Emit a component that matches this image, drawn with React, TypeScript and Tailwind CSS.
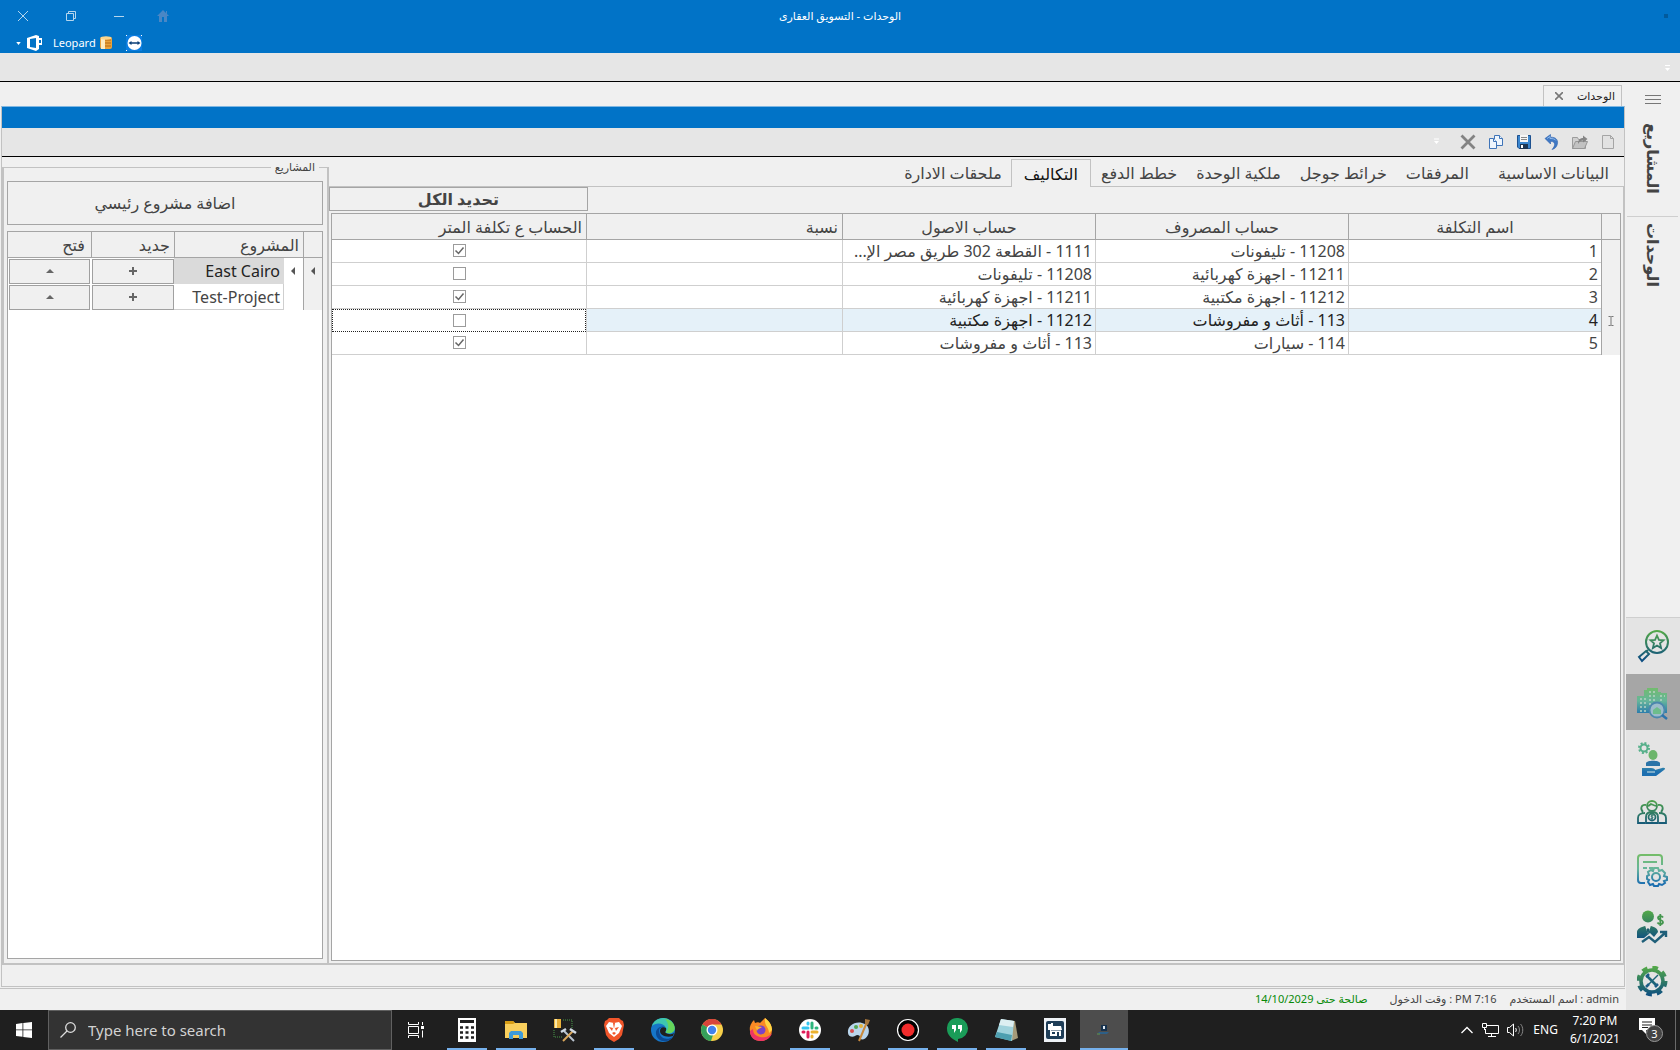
import { useState } from "react";
import type { ReactNode } from "react";

type Cost = {
  name: string;
  expense: string;
  asset: string;
  perMeter: boolean;
};

const costs: Cost[] = [
  { name: "1", expense: "11208 - تليفونات", asset: "1111 - القطعة 302 طريق مصر الإ...", perMeter: true },
  { name: "2", expense: "11211 - اجهزة كهربائية", asset: "11208 - تليفونات", perMeter: false },
  { name: "3", expense: "11212 - اجهزة مكتبية", asset: "11211 - اجهزة كهربائية", perMeter: true },
  { name: "4", expense: "113 - أثاث و مفروشات", asset: "11212 - اجهزة مكتبية", perMeter: false },
  { name: "5", expense: "114 - سيارات", asset: "113 - أثاث و مفروشات", perMeter: true },
];

const tabs = [
  "البيانات الاساسية",
  "المرفقات",
  "خرائط جوجل",
  "ملكية الوحدة",
  "خطط الدفع",
  "التكاليف",
  "ملحقات الادارة",
];

const TitleBar = () => (
  <header className="bg-[#0173c7] text-white h-[53px] shrink-0">
    <div className="grid grid-cols-[1fr_auto_1fr] h-8 items-center">
      <div className="pr-3">
        <span className="block w-1 h-1 bg-[#015a9c]"></span>
      </div>
      <h1 className="text-[11px] leading-4">الوحدات - التسويق العقارى</h1>
      <div dir="ltr" className="flex items-center gap-9 pl-[17px] text-[#b5d6ee]">
        <button aria-label="Close" className="w-3 h-3">
          <svg viewBox="0 0 12 12" className="w-3 h-3" stroke="currentColor" fill="none"><path d="M1 1l10 10M11 1L1 11" /></svg>
        </button>
        <button aria-label="Restore" className="w-3 h-3">
          <svg viewBox="0 0 12 12" className="w-3 h-3" stroke="currentColor" fill="none"><path d="M1.500 3.500h7v7h-7zM3.500 3.500v-2h7v7h-2" /></svg>
        </button>
        <button aria-label="Minimize" className="w-3 h-3">
          <svg viewBox="0 0 12 12" className="w-3 h-3" stroke="currentColor" fill="none"><path d="M1 6.500h10" /></svg>
        </button>
        <button aria-label="Home" className="w-3 h-3 -ml-1 text-[#4a87c5]">
          <svg viewBox="0 0 12 12" className="w-3 h-3" fill="currentColor"><path d="M6 0L0 6h2v6h3V7h2v5h3V6h2l-2-2V1H9v2z" /></svg>
        </button>
      </div>
    </div>
    <div dir="ltr" className="flex items-center h-[21px] pt-px pl-4">
      <svg viewBox="0 0 6 4" className="w-[5px] h-[3px]" fill="#fff"><path d="M0 0h6L3 4z" /></svg>
      <svg viewBox="0 0 16 16" className="w-4 h-4 ml-[6px]" fill="#fff"><path fillRule="evenodd" d="M0 3l9-3 3 1v2h3v7h-3v4l-3 2-9-3zM3 4v8l6 1V3zM12 5v3h2V5z" /></svg>
      <span className="text-[11px] leading-4 ml-[10px]">Leopard</span>
      <svg viewBox="0 0 12 14" className="w-3 h-[14px] ml-1">
        <rect y="1" width="12" height="12" rx="2" fill="#e9a23b" />
        <rect x="1" y="1" width="4" height="12" fill="#fdebc0" />
        <path d="M5 4h6M5 7h6M5 10h6" stroke="#b76b14" />
        <ellipse cx="6" cy="2" rx="5.500" ry="1.700" fill="#fbd58d" />
      </svg>
      <svg viewBox="0 0 16 16" className="w-4 h-4 ml-[14px]">
        <rect width="16" height="16" fill="#0b7de0" />
        <path d="M0 0h1v1H0zM15 0h1v1h-1zM0 15h1v1H0z" fill="#fff" />
        <circle cx="8.500" cy="8" r="7" fill="#fff" />
        <path d="M2.500 8l3-2v1.300h6V6l3 2-3 2V8.700h-6V10z" fill="#0b3f78" />
      </svg>
    </div>
  </header>
);

const Toolbar = () => (
  <div className="flex items-center gap-3 h-7 bg-[#e6e6e6] pr-2 shrink-0">
    <button aria-label="New" className="w-4 h-4">
      <svg viewBox="0 0 16 16" className="w-4 h-4"><path d="M2.500 1.500h8l3 3v10h-11z" fill="#e2e2e2" stroke="#a5a5a5" /><path d="M10.500 1.500v3h3" fill="none" stroke="#a5a5a5" /></svg>
    </button>
    <button aria-label="Open" className="w-4 h-4">
      <svg viewBox="0 0 16 16" className="w-4 h-4"><path d="M.5 14.500v-11h5l1 2h7v9z" fill="#d0d0d0" stroke="#9c9c9c" /><path d="M.5 14.500l3-7h12l-3 7z" fill="#c2c2c2" stroke="#979797" /><path d="M6 10c0-4 2-6 5-6V1.500L15.500 5 11 8.500V6.500c-2 0-3.500 1-5 3.500z" fill="#858585" /></svg>
    </button>
    <button aria-label="Undo" className="w-4 h-4">
      <svg viewBox="0 0 16 16" className="w-4 h-4"><path d="M1 4.500L6.500.5v2.700C12 3 14 6 13.500 9.500 13 12.500 11 15 8 15.500c3-3 4.500-8-1.500-8.200V10z" fill="#3f78c3" stroke="#2c5fae" strokeWidth=".6" /><path d="M3 4.500l3-2v2c3 0 5 .5 6 2" fill="none" stroke="#8fb8ea" /></svg>
    </button>
    <button aria-label="Save" className="w-4 h-4">
      <svg viewBox="0 0 16 16" className="w-4 h-4"><path d="M1.500 1.500h13v13H3l-1.500-1.500z" fill="#3a86cf" stroke="#1e518f" /><rect x="4" y="1" width="8" height="7" fill="#f6f6f6" /><path d="M5 3.500h6M5 5.500h6" stroke="#888" /><rect x="4" y="10" width="8" height="5" fill="#1c3552" /><rect x="5" y="11" width="2" height="3" fill="#fff" /></svg>
    </button>
    <button aria-label="Copy" className="w-4 h-4">
      <svg viewBox="0 0 16 16" className="w-4 h-4" fill="#eef5fd" stroke="#3f74b8"><path d="M6.500 1.500h5l3 3v7h-8z" /><path d="M11.500 1.500v3h3" /><path d="M1.500 4.500h4l3 3v7h-7z" /><path d="M5.500 4.500v3h3" /></svg>
    </button>
    <button aria-label="Delete" className="w-4 h-4">
      <svg viewBox="0 0 16 16" className="w-4 h-4" fill="none" stroke="#838383" strokeWidth="2.800"><path d="M1.500 1.500l13 13M14.500 1.500l-13 13" /></svg>
    </button>
    <button aria-label="More" className="w-4 h-4 mr-1">
      <svg viewBox="0 0 16 16" className="w-4 h-4" fill="#fff"><path d="M6 4.500h5v1H6zM6 7h5L8.500 10z" /></svg>
    </button>
  </div>
);

const ProjectRow = ({ name, active }: { name: string; active?: boolean }) => (
  <tr className="h-[26px]">
    <td className="bg-[#f0f0f0] border-l border-[#a5a5a5] p-0">
      {active && <svg viewBox="0 0 4 8" className="w-1 h-2 mx-auto" fill="#555"><path d="M4 0v8L0 4z" /></svg>}
    </td>
    <td className="p-0">
      {active && <svg viewBox="0 0 4 8" className="w-1 h-2 mr-2" fill="#555"><path d="M4 0v8L0 4z" /></svg>}
    </td>
    <td className={active ? "bg-[#dadada] text-[#222] p-0 pr-1" : "bg-white border-b border-r border-[#cfcfcf] p-0 pr-[3px]"}>
      <span dir="ltr">{name}</span>
    </td>
    <td className="p-0 pl-px">
      <button aria-label="جديد" className="block w-full h-[25px] bg-[#f0f0f0] border border-[#a0a0a0]">
        <svg viewBox="0 0 8 8" className="w-2 h-2 mx-auto" stroke="#666" strokeWidth="2"><path d="M4 0v8M0 4h8" /></svg>
      </button>
    </td>
    <td className="p-0 px-px">
      <button aria-label="فتح" className="block w-full h-[25px] bg-[#f0f0f0] border border-[#a0a0a0]">
        <svg viewBox="0 0 8 4" className="w-2 h-1 mx-auto" fill="#666"><path d="M0 4h8L4 0z" /></svg>
      </button>
    </td>
  </tr>
);

const Projects = () => (
  <fieldset className="w-[327px] shrink-0 min-w-0 flex flex-col border-2 border-t border-[#c2c2c2] pl-[3px] pr-1 pt-1 pb-1">
    <legend className="text-[11px] leading-5 px-1 mr-1">المشاريع</legend>
    <div className="flex flex-col gap-[6px] h-full">
      <button className="h-[44px] w-full shrink-0 border border-[#a5a5a5] text-base">اضافة مشروع رئيسي</button>
      <div className="grow bg-white border border-[#a5a5a5]">
        <table className="w-full table-fixed border-separate border-spacing-0 text-base leading-5">
          <colgroup>
            <col className="w-[19px]" />
            <col className="w-[19px]" />
            <col className="w-[110px]" />
            <col className="w-[83px]" />
            <col />
          </colgroup>
          <thead>
            <tr className="h-[26px] bg-[#f0f0f0] text-right">
              <th className="border-b border-l border-[#a5a5a5] p-0"></th>
              <th colSpan={2} className="border-b border-l border-[#a5a5a5] font-normal p-0 pr-1">المشروع</th>
              <th className="border-b border-l border-[#a5a5a5] font-normal p-0 pr-1">جديد</th>
              <th className="border-b border-[#a5a5a5] font-normal p-0 pr-[6px]">فتح</th>
            </tr>
          </thead>
          <tbody>
            <ProjectRow name="East Cairo" active />
            <ProjectRow name="Test-Project" />
          </tbody>
        </table>
      </div>
    </div>
  </fieldset>
);

const CostTable = () => {
  const [rows, setRows] = useState(costs);
  const toggle = (name: string) => {
    setRows(rows.map((r) => (r.name === name ? { ...r, perMeter: !r.perMeter } : r)));
  };

  return (
    <table className="w-full table-fixed border-separate border-spacing-0 text-base leading-5">
      <thead>
        <tr className="h-[26px] bg-[#f0f0f0] [&>th]:border-b [&>th]:border-l [&>th]:border-[#a5a5a5] [&>th]:font-normal [&>th]:p-0">
          <th className="w-[19px]"></th>
          <th className="w-[253px]">اسم التكلفة</th>
          <th className="w-[253px]">حساب المصروف</th>
          <th className="w-[253px]">حساب الاصول</th>
          <th className="w-[256px]"><div className="text-right pr-1">نسبة</div></th>
          <th className="border-l-0!"><div className="text-right pr-1">الحساب ع تكلفة المتر</div></th>
        </tr>
      </thead>
      <tbody>
        {rows.map((row) => {
          const current = row.name === "4";
          const cell = "border-b border-l border-[#cfcfcf] p-0 pr-[3px] whitespace-nowrap overflow-hidden";
          return (
            <tr key={row.name} className={current ? "h-[23px] bg-[#e5f1f9] text-[#222]" : "h-[23px]"}>
              <td className="bg-[#f0f0f0] border-l border-[#a5a5a5] p-0">
                {current && (
                  <svg viewBox="0 0 6 10" className="w-[6px] h-[10px] mx-auto" fill="none" stroke="#777"><path d="M.5.5h2l.5.500.500-.500h2M3 1v8M.5 9.500h2l.5-.500.500.500h2" /></svg>
                )}
              </td>
              <td className={cell}>{row.name}</td>
              <td className={cell}>{row.expense}</td>
              <td className={cell}>{row.asset}</td>
              <td className={cell}></td>
              <td className={current ? "bg-white border border-dotted border-[#222] p-0" : "border-b border-[#cfcfcf] p-0 pb-px"}>
                <label className="relative block w-[13px] h-[13px] mx-auto">
                  <input
                    type="checkbox"
                    aria-label="الحساب ع تكلفة المتر"
                    checked={row.perMeter}
                    onChange={() => toggle(row.name)}
                    className="block appearance-none w-[13px] h-[13px] bg-white border border-[#9b9b9b]"
                  />
                  {row.perMeter && (
                    <svg viewBox="0 0 13 13" className="absolute inset-0 pointer-events-none" fill="none" stroke="#666" strokeWidth="1.500"><path d="M2.500 6.500l3 3 5-6" /></svg>
                  )}
                </label>
              </td>
            </tr>
          );
        })}
      </tbody>
    </table>
  );
};

const Costs = () => (
  <section className="grow min-w-0 flex flex-col">
    <nav className="flex h-[30px] pt-[2px] shrink-0 text-base">
      {tabs.map((tab) =>
        tab === "التكاليف" ? (
          <button key={tab} className="px-3 border border-b-0 border-[#c2c2c2] text-[#111] whitespace-nowrap">{tab}</button>
        ) : (
          <button key={tab} className="pr-[9px] pl-[10px] border-b border-[#c2c2c2] whitespace-nowrap first:pr-[15px] first:pl-5">{tab}</button>
        )
      )}
      <div className="grow border-b border-[#c2c2c2]"></div>
    </nav>
    <div className="grow flex flex-col border-r border-b-2 border-[#c2c2c2]">
      <div className="flex justify-end h-[26px] shrink-0">
        <button className="w-[259px] h-6 border border-[#a5a5a5] text-base leading-5 font-bold">تحديد الكل</button>
      </div>
      <div className="grow bg-white border border-[#a5a5a5] mr-[2px] ml-[2px] mb-[2px]">
        <CostTable />
      </div>
    </div>
  </section>
);

/* side module icons */

const moduleIcons: ReactNode[] = [
  <g key="a" fill="none" stroke="url(#mod)">
    <circle cx="20" cy="12" r="11" strokeWidth="2" />
    <path d="M20 5.500l1.900 4.400 4.600.4-3.500 3 1.100 4.700-4.100-2.500-4.100 2.500 1.100-4.700-3.500-3 4.600-.4z" strokeWidth="1.800" />
    <path d="M11 20l-2 2M2 27l7-6 3 3-7 7z" strokeWidth="2" />
  </g>,
  <g key="b">
    <path d="M0 28V10h7V4h3V2h11v4h3v1h6v20H0z" fill="url(#modSoft)" />
    <path d="M3 13h2m2 0h2M3 17h2m2 0h2M3 21h2m2 0h2M12 6h2m2 0h2M12 10h2m2 0h2M12 14h2m2 0h2M23 10h2m2 0h1M23 14h2M3 25h2m2 0h2M12 18h2" stroke="#b9d2c4" strokeWidth="1.500" />
    <circle cx="20" cy="24" r="7.500" fill="#9cbccb" stroke="#4c87ad" strokeWidth="1.800" />
    <path d="M16 24l4-3 4 3v4h-8z" fill="#6dbd8b" />
    <path d="M25 29l5 4" stroke="#2c74ad" strokeWidth="2.500" />
  </g>,
  <g key="c">
    <circle cx="7" cy="6" r="3.500" fill="none" stroke="#57b08b" strokeWidth="2" />
    <circle cx="7" cy="6" r="5" fill="none" stroke="#57b08b" strokeWidth="2" strokeDasharray="2 1.900" />
    <ellipse cx="16" cy="13" rx="4.500" ry="5" fill="#6cb56b" />
    <path d="M9 24v-3c1-3 13-3 14 0v3z" fill="#2b74a8" />
    <path d="M5 26h9c3 0 4 1 4 2l7-2c3-1 4 1 2 2l-8 6H5z" fill="url(#modSoft)" />
    <path d="M10 30h8" stroke="#d8e8e4" />
  </g>,
  <g key="d" fill="none" stroke="url(#mod)" strokeWidth="1.800">
    <circle cx="15" cy="8" r="5" />
    <path d="M10 8c2 0 3-1 4-2 2 1 4 2 6 2M9 25V19c0-3 2-5 6-5s6 2 6 5v6z" />
    <path d="M9 7c-5-1-6 4-3 7M21 7c5-1 6 4 3 7M8 15c-5 0-7 2-7 5v5h7M22 15c5 0 7 2 7 5v5h-7" />
    <circle cx="15" cy="19" r="3.500" />
    <path d="M16.500 17.500c-3-1-3 1.500-1.500 1.500s1.500 2-1.500 1.500M15 16v6" strokeWidth="1" />
  </g>,
  <g key="e" fill="none" stroke="url(#modSoft)" strokeWidth="2">
    <path d="M8 29H4c-2 0-3-1-3-3V4c0-2 1-3 3-3h18c2 0 3 1 3 3v7M6 8h14M6 14h4M12 14h4" />
    <path d="M17 14h4l1 3 3-1 3 3-1 3 3 1v3l-3 1 1 2-3 2-3-1-1 2h-4l-1-2-3 1-2-3 1-2-2-1v-3l2-1-1-3 3-2 2 1z" />
    <circle cx="19" cy="23" r="4" />
  </g>,
  <g key="f">
    <circle cx="11" cy="6.500" r="6" fill="url(#mod)" />
    <path d="M0 28v-6c0-3 4-5 8-6l3 4 3-4c4 1 7 3 7 6l-4 5-4-4-6 5z" fill="url(#mod)" />
    <path d="M8.500 17l2.500 7 2.500-7" fill="#e5e5e5" />
    <path d="M11 18l1.500 1.500L11 25l-1.500-5.500z" fill="#1b5c6c" />
    <path d="M5 32l7-5 6 5 10-9M23 22h6v5" fill="none" stroke="#1f5f79" strokeWidth="2.400" />
    <path d="M26 7.500c-1-2-5-2-5 .5s5 1.500 5 4-4 3-5.500.500M23.300 4v12" fill="none" stroke="#43964e" strokeWidth="1.800" />
  </g>,
  <g key="g">
    <circle cx="15" cy="15" r="13.500" fill="none" stroke="url(#mod)" strokeWidth="4" strokeDasharray="5.600 5" />
    <circle cx="15" cy="15" r="11" fill="none" stroke="url(#mod)" strokeWidth="3.500" />
    <path d="M10 10l9 9" stroke="#1c6478" strokeWidth="2.600" />
    <path d="M21 9L10 20" stroke="#1c6478" strokeWidth="1.500" />
    <path d="M9 11l3-3M18 21l3-3M9 21l3-3" stroke="#1c5c86" strokeWidth="2.500" fill="none" />
  </g>,
];

const SideBar = () => (
  <aside className="w-[55px] shrink-0 flex flex-col items-stretch">
    <button aria-label="القائمة" className="mt-3 mx-auto w-4 h-[11px]">
      <svg viewBox="0 0 16 11" className="w-4 h-[11px]" stroke="#777"><path d="M0 1.500h16M0 5.500h16M0 9.500h16" /></svg>
    </button>
    <button className="[writing-mode:vertical-rl] h-[111px] self-center text-[16px] leading-6 font-semibold flex items-center justify-center pb-1">المشاريع</button>
    <div className="h-px bg-[#cfcfcf] mx-[2px]"></div>
    <button className="[writing-mode:vertical-rl] h-[76px] self-center text-[16px] leading-6 font-semibold flex items-center justify-center">الوحدات</button>
    <div className="mt-auto ml-px bg-[#e4e4e4] border-t border-[#cfcfcf]">
      {moduleIcons.map((icon, i) => (
        <button
          key={i}
          aria-label="module"
          className={i === 1 ? "flex w-full h-14 pt-[2px] items-center justify-center bg-[#a6a6a6]" : "flex w-full h-14 pt-[2px] items-center justify-center"}
        >
          <svg viewBox="0 0 32 34" className="w-8 h-[34px]">
            <defs>
              <linearGradient id="mod" gradientUnits="userSpaceOnUse" x1="0" y1="0" x2="0" y2="30"><stop stopColor="#55ab47" /><stop offset="1" stopColor="#0d4d81" /></linearGradient>
              <linearGradient id="modSoft" gradientUnits="userSpaceOnUse" x1="0" y1="0" x2="0" y2="30"><stop stopColor="#74bd67" /><stop offset=".5" stopColor="#66b59b" /><stop offset="1" stopColor="#1d6fb0" /></linearGradient>
            </defs>
            {icon}
          </svg>
        </button>
      ))}
    </div>
  </aside>
);

type TaskApp = { name: string; running?: boolean; active?: boolean; icon: ReactNode };

const taskApps: TaskApp[] = [
  {
    name: "Calculator",
    running: true,
    icon: (
      <>
        <path d="M3 0h18v24H3z" fill="#fff" />
        <path d="M5 2h14v3H5z" fill="#1f1f1f" />
        <path d="M5 9.500h3m2.500 0h3m2.500 0h3M5 14.500h3m2.500 0h3m2.500 0h3M5 19.500h3m2.500 0h3m2.500 0h3" stroke="#1f1f1f" strokeWidth="2.500" />
      </>
    ),
  },
  {
    name: "File Explorer",
    running: true,
    icon: (
      <>
        <path d="M1 3h8l2 2h12v15H1z" fill="#f9cf5c" />
        <path d="M1 3h8l2 2-2 1H1z" fill="#d79d15" />
        <path d="M5 21v-6l2-2h10l2 2v6h-4v-4H9v4z" fill="#3f9bd8" />
      </>
    ),
  },
  {
    name: "Database tools",
    icon: (
      <>
        <path d="M1 1h7v9H1z" fill="#eab23c" />
        <path d="M2 1h2v9H2z" fill="#fce9a8" />
        <path d="M10 2h9v8M1 12v7h8" fill="none" stroke="#4a9a4a" strokeDasharray="1 1" />
        <path d="M11 13l10 10" stroke="#b9c3cf" strokeWidth="2" />
        <path d="M20 13L10 23" stroke="#d9a65a" strokeWidth="2" />
        <path d="M8 14l5-3M17 11l6 4" stroke="#cfd8e2" strokeWidth="2.500" />
      </>
    ),
  },
  {
    name: "Brave",
    running: true,
    icon: (
      <>
        <path d="M7 0h10l2 2 2 1 1 4-2 10-3 4-5 3-5-3-3-4L2 7l1-4 2-1z" fill="#f1562b" />
        <path d="M7 4l5 1 5-1 3 4-3 7-5 4-5-4-3-7z" fill="#fff" />
        <path d="M7 9l4 1-1 3zM17 9l-4 1 1 3zM10 15l2-1 2 1-2 2zM11 5h2l-1 6z" fill="#f1562b" />
      </>
    ),
  },
  {
    name: "Edge",
    icon: (
      <>
        <circle cx="12" cy="12" r="12" fill="#1676c9" />
        <path d="M1 8C4-2 19-3 23 7c2 6-3 10-8 8-2-1 1-2 0-5-3-6-11-5-14-2z" fill="#3ec6b0" />
        <path d="M14 1c9 1 12 10 8 13-3 2-7 1-7 0 4-4 2-10-1-13z" fill="#66d55a" />
        <path d="M8 12c0 8 7 11 14 7-6 8-18 4-17-5 0-3 5-7 9-5-4 0-6 1-6 3z" fill="#0c4a94" />
        <path d="M15 15c-2-1 1-2 0-5-3-2-6 0-6 3 0 4 6 7 13 5l1-3c-3 2-6 1-8 0z" fill="#1f1f1f" />
      </>
    ),
  },
  {
    name: "Chrome",
    icon: (
      <>
        <circle cx="12" cy="12" r="11" fill="#f7cf4a" />
        <path d="M12 12L2.500 6.500C6-1 18-1 21.500 6.500H12z" fill="#d9453b" />
        <path d="M2.500 6.500L12 12l1 5-2 6C2 22-1 13 2.500 6.500z" fill="#35a05a" />
        <circle cx="12" cy="12" r="5.500" fill="#fff" />
        <circle cx="12" cy="12" r="4.200" fill="#4381ec" />
      </>
    ),
  },
  {
    name: "Firefox",
    icon: (
      <>
        <path d="M1 13C0 8 3 4 5 2l1 3c2-1 4-1 5 0l5-5c4 3 7 7 7 12 0 6-5 11-11 11S1 19 1 13z" fill="#fb8a25" />
        <path d="M1 13c0 7 5 10 11 10s10-4 11-8c-3 4-7 5-12 4-4-1-7-3-7-8z" fill="#ee3566" />
        <path d="M16 0c4 3 7 7 7 12l-3 3c0-6-5-7-4-15z" fill="#ffd644" />
        <circle cx="12" cy="12" r="4.500" fill="#7b43c9" />
        <path d="M6 8l7 1c-2 2-4 1-5 4z" fill="#fdb42e" />
      </>
    ),
  },
  {
    name: "Slack",
    running: true,
    icon: (
      <>
        <circle cx="12" cy="12" r="11" fill="#fff" />
        <g strokeWidth="3" strokeLinecap="round">
          <path d="M5 10h5M10 5v1" stroke="#36c5f0" />
          <path d="M14 5v5M18 10h1" stroke="#2eb67d" />
          <path d="M14 14h5M14 18v1" stroke="#ecb22e" />
          <path d="M10 14v5M5 14h1" stroke="#e01e5a" />
        </g>
      </>
    ),
  },
  {
    name: "Paint",
    icon: (
      <>
        <path d="M1 15C0 8 8 3 15 5c7 1 8 8 6 12-3 6-9 5-8 2 0-2-3-3-5-1-3 2-7 0-7-3z" fill="#b9d5ec" />
        <circle cx="5" cy="13" r="2" fill="#d94c4c" />
        <circle cx="9" cy="9" r="2" fill="#53a653" />
        <circle cx="14" cy="8" r="2" fill="#e6b43c" />
        <path d="M12 23l8-19" stroke="#c98a3d" strokeWidth="2" />
        <path d="M18 1l5 1-2 5-3-1z" fill="#a5763d" />
      </>
    ),
  },
  {
    name: "Recorder",
    running: true,
    icon: (
      <>
        <circle cx="12" cy="12" r="10.500" fill="#000" stroke="#fff" strokeWidth="1.200" />
        <circle cx="12" cy="12" r="6.500" fill="#f02b2b" />
      </>
    ),
  },
  {
    name: "Hangouts",
    running: true,
    icon: (
      <>
        <path d="M12 0a10.500 10.500 0 0 1 1 21v3c-6-3-11-7-11-13A10 10 0 0 1 12 0z" fill="#1a9c58" />
        <path d="M7 7h4v5l-2 3V11H7zM13 7h4v5l-2 3v-4h-2z" fill="#fff" />
      </>
    ),
  },
  {
    name: "Notepad",
    running: true,
    icon: (
      <>
        <path d="M7 2l14 1 3 17-7 3z" fill="#a59a79" />
        <path d="M7 1l13 2-2 20L1 19z" fill="#9fd2dc" />
        <path d="M7 1l13 2-1 6L5 7z" fill="#ddeff2" />
        <path d="M3 14l15 3-1 6L1 19z" fill="#4d9fb0" />
      </>
    ),
  },
  {
    name: "Store",
    icon: (
      <>
        <path d="M1 0h22v24H1z" fill="#eef2f6" />
        <rect x="3" y="3" width="18" height="18" rx="2" fill="#1e3d57" />
        <path d="M5 6h3V5h2v3h8l1 4h-1v6H7v-6H5z" fill="#fff" />
        <path d="M9 14h3v2H9zM14 14h2v4h-2zM8 12h10v.500H8z" fill="#1e3d57" />
      </>
    ),
  },
  {
    name: "Leopard",
    running: true,
    active: true,
    icon: (
      <>
        <path d="M9 7h6v6H9z" fill="#17324d" />
        <path d="M11 8h2v3h-2z" fill="#dfe9f2" />
        <path d="M6 14h11l-2 2H8z" fill="#2d5f87" />
        <path d="M5 16h3" stroke="#5f9a54" />
      </>
    ),
  },
];

const TaskBar = () => (
  <footer dir="ltr" className="flex h-10 shrink-0 bg-[#1f1f1f] text-white">
    <button aria-label="Start" className="w-12 flex items-center justify-center">
      <svg viewBox="0 0 16 16" className="w-4 h-4" fill="#fff"><path d="M0 2l6.500-.900V7.500H0zM7.300 1L16 0v7.500H7.300zM0 8.300h6.500v6.500L0 14zM7.300 8.300H16V16l-8.700-1.100z" /></svg>
    </button>
    <label className="w-[344px] flex items-center gap-3 bg-[#333] border border-[#606060] pl-[11px]">
      <svg viewBox="0 0 16 16" className="w-4 h-4" fill="none" stroke="#ddd" strokeWidth="1.300"><circle cx="10.500" cy="5.500" r="4.800" /><path d="M7 9l-6.500 6.500" /></svg>
      <input type="text" aria-label="Search" placeholder="Type here to search" className="grow bg-transparent text-[15px] leading-5 placeholder:text-[#d2d2d2] outline-none" />
    </label>
    <button aria-label="Task View" className="w-[51px] pr-1 flex items-center justify-center">
      <svg viewBox="0 0 16 16" className="w-4 h-4" fill="none" stroke="#fff"><path d="M.5 0v2.500h10V0M.5 16v-2.500h10V16M.5 4.500h10v7H.5zM14.500 0v3M14.500 8.500v7" /><path d="M13 4h3v3h-3z" fill="#fff" stroke="none" /></svg>
    </button>
    <div className="flex gap-px">
      {taskApps.map((app) => (
        <button
          key={app.name}
          aria-label={app.name}
          className={app.active ? "w-12 flex flex-col items-center bg-[#4d4d4d]" : "w-12 flex flex-col items-center"}
        >
          <svg viewBox="0 0 24 24" className="w-6 h-6 mt-2">{app.icon}</svg>
          {app.running && <span className={app.active ? "w-full h-[2px] mt-auto bg-[#76b1ec]" : "w-10 h-[2px] mt-auto bg-[#76b1ec]"}></span>}
        </button>
      ))}
    </div>
    <div className="ml-auto flex items-center text-[12px] leading-[18px]">
      <button aria-label="Hidden icons" className="mr-[9px]">
        <svg viewBox="0 0 12 8" className="w-3 h-2" fill="none" stroke="#fff" strokeWidth="1.300"><path d="M.5 7L6 1.500 11.500 7" /></svg>
      </button>
      <svg viewBox="0 0 17 14" className="w-[17px] h-[14px] mr-2" fill="none" stroke="#fff"><path d="M5 2.500h11.500v8H3.500V6M9.500 10.500v3M6 13.500h8M.5.5h4v4h-4zM2.500 4.500V7" /></svg>
      <svg viewBox="0 0 17 14" className="w-[17px] h-[14px] mr-[9px]" fill="none" stroke="#fff"><path d="M.5 4.500h2l4-3.500v12l-4-3.500h-2zM8.500 5c1 1 1 3 0 4" /><path d="M11 3c2 2 2 6 0 8M13.500 1c3 3 3 9 0 12" stroke="#888" /></svg>
      <span className="mr-3">ENG</span>
      <div className="text-center mr-[19px]">
        <p>7:20 PM</p>
        <p>6/1/2021</p>
      </div>
      <button aria-label="Notifications" className="w-6 h-6 mr-3">
        <svg viewBox="0 0 24 24" className="w-6 h-6">
          <path d="M0 0h16v12H7v4l-4-4H0z" fill="#fff" />
          <path d="M3 4h10M3 7h10M3 9.500h6" stroke="#1f1f1f" />
          <circle cx="15.500" cy="15.500" r="8" fill="#444" stroke="#999" />
          <text x="15.500" y="19.500" fontSize="11" textAnchor="middle" fill="#fff">3</text>
        </svg>
      </button>
      <span className="w-px h-10 bg-[#6a6a6a] mr-1"></span>
    </div>
  </footer>
);

const App = () => {
  return (
    <div dir="rtl" className="min-h-screen flex flex-col bg-[#f0f0f0] text-[#444] font-['Noto_Sans','DejaVu_Sans',sans-serif]">
      <TitleBar />
      <div className="h-[29px] shrink-0 bg-[#e6e6e6] border-b border-black pr-[10px] pt-3">
        <svg viewBox="0 0 5 6" className="w-[5px] h-[6px]" fill="#fff"><path d="M0 0h5v1H0zM0 3h5L2.500 6z" /></svg>
      </div>
      <div className="grow flex">
        <SideBar />
        <main className="grow min-w-0 flex flex-col">
          <div className="flex h-6 pt-[3px] pr-[3px] shrink-0">
            <div className="flex items-center gap-[14px] w-[79px] border border-b-0 border-[#c2c2c2] pr-[6px] text-[11px] text-[#222]">
              <span>الوحدات</span>
              <button aria-label="إغلاق" className="w-2 h-2">
                <svg viewBox="0 0 8 8" className="w-2 h-2" stroke="#777" strokeWidth="1.600"><path d="M0 0l8 8M8 0L0 8" /></svg>
              </button>
            </div>
          </div>
          <div className="grow flex flex-col border border-[#c2c2c2] border-t-[#7fb7e2] ml-px">
            <div className="h-[21px] bg-[#0173c7] shrink-0"></div>
            <Toolbar />
            <div className="h-px bg-black shrink-0"></div>
            <div className="grow flex">
              <Costs />
              <Projects />
            </div>
            <div className="h-[21px] shrink-0"></div>
          </div>
          <div className="h-[22px] mt-px shrink-0 border-t border-[#c2c2c2] flex items-center text-[11px] pr-[6px]">
            <span className="ml-[13px]">admin : اسم المستخدم</span>
            <span className="ml-[22px]">7:16 PM : وقت الدخول</span>
            <span className="text-[#078a07]">صالحة حتى 14/10/2029</span>
          </div>
        </main>
      </div>
      <TaskBar />
    </div>
  );
};

export default App;
